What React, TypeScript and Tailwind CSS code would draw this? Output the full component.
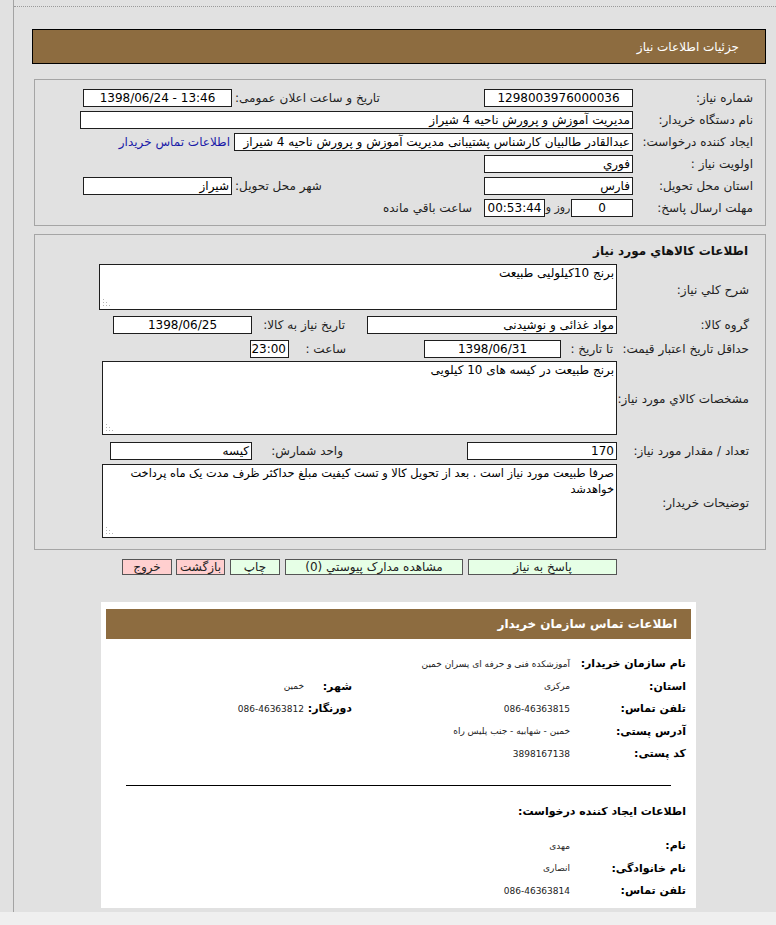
import React from 'react'

const F = "font-['DejaVu_Sans',sans-serif]"

const Box = ({ w, children, align = 'right', ltr, className = '' }: { w: string; children?: React.ReactNode; align?: 'right' | 'center'; ltr?: boolean; className?: string }) => (
  <div
    dir={ltr ? 'ltr' : undefined}
    className={`${w} h-[18px] shrink-0 overflow-hidden whitespace-nowrap border border-[#1e1e1e] bg-white px-[2px] leading-[16px] text-black ${align === 'center' ? 'text-center' : 'text-right'} ${className}`}
  >
    {children}
  </div>
)

const Grip = () => (
  <svg className="absolute bottom-[2px] left-[2px]" width="9" height="9" viewBox="0 0 9 9">
    {[
      [1, 7], [4, 7], [7, 7], [1, 4], [4, 4], [1, 1],
    ].map(([x, y], i) => (
      <rect key={i} x={x} y={y} width="1" height="1" fill="#b5b5b5" />
    ))}
  </svg>
)

const Area = ({ w, h, children, className = '' }: { w: string; h: string; children?: React.ReactNode; className?: string }) => (
  <div className={`relative ${w} ${h} shrink-0 border border-[#1e1e1e] bg-white px-[2px] text-right leading-[16px] text-black ${className}`}>
    {children}
    <Grip />
  </div>
)

const Btn = ({ w, pink, children }: { w: string; pink?: boolean; children: React.ReactNode }) => (
  <div
    className={`${w} h-[16px] shrink-0 whitespace-nowrap border border-[#555] text-center leading-[14px] text-[#222] ${pink ? 'bg-[#ffcfcf]' : 'bg-[#e6ffe6]'}`}
  >
    {children}
  </div>
)

const Row = ({ children, className = '' }: { children: React.ReactNode; className?: string }) => (
  <div className={`flex items-center ${className}`}>{children}</div>
)

const InfoRow = ({ label, value, label2, value2 }: { label: string; value: string; label2?: string; value2?: string }) => (
  <div className="flex h-[22.5px] items-center">
    <div className="w-[116px] shrink-0 text-right text-[11px] font-bold text-black">{label}</div>
    <div className="w-[218px] shrink-0 text-right text-[9px] text-[#222]">{value}</div>
    {label2 && <div className="w-[48px] shrink-0 text-right text-[11px] font-bold text-black">{label2}</div>}
    {value2 && <div className="shrink-0 text-right text-[9px] text-[#222]">{value2}</div>}
  </div>
)

export default function App() {
  return (
    <div dir="rtl" className={`${F} min-h-[925px] w-[776px] bg-[#efefef] text-[12px] text-[#1e1e1e]`}>
      <div className="flex h-[912px] bg-[#e1e1e1]" dir="ltr">
        <div className="w-[13px] shrink-0" />
        <div className="w-[1px] shrink-0 bg-[#a3a3a3]" />
        <div className="flex-1" dir="rtl">
          <div className="mt-[6px] border-t border-dotted border-[#9a9a9a]" />

          {/* header */}
          <div className="ml-[18px] mr-[10px] mt-[22px] flex h-[35px] items-center border border-black bg-[#8d6c40] pr-[26px] text-white">
            جزئیات اطلاعات نیاز
          </div>

          {/* section 1 */}
          <div className="ml-[20px] mr-[10px] mt-[15px] border border-[#a5a5a5] pb-[8px] pt-[9px]">
            <div className="flex flex-col gap-[4px]">
              <Row>
                <div className="w-[130px] shrink-0 pr-[12px]">شماره نیاز:</div>
                <Box w="w-[149px] mr-[2px]" align="center">1298003976000036</Box>
                <div className="w-[252px] shrink-0 pl-[3px] text-left">تاریخ و ساعت اعلان عمومی:</div>
                <Box w="w-[149px]" align="center" ltr>1398/06/24 - 13:46</Box>
              </Row>
              <Row>
                <div className="w-[130px] shrink-0 pr-[12px]">نام دستگاه خریدار:</div>
                <Box w="w-[553px] mr-[2px]">مدیریت آموزش و پرورش ناحیه 4 شیراز</Box>
              </Row>
              <Row>
                <div className="w-[130px] shrink-0 whitespace-nowrap pr-[12px]">ایجاد کننده درخواست:</div>
                <Box w="w-[399px] mr-[2px]">عبدالقادر طالبیان کارشناس پشتیبانی مدیریت آموزش و پرورش ناحیه 4 شیراز</Box>
                <div className="mr-[4px] shrink-0 text-[#1a1aa8]">اطلاعات تماس خریدار</div>
              </Row>
              <Row>
                <div className="w-[130px] shrink-0 pr-[12px]">اولویت نیاز :</div>
                <Box w="w-[149px] mr-[2px]">فوري</Box>
              </Row>
              <Row>
                <div className="w-[130px] shrink-0 pr-[12px]">استان محل تحویل:</div>
                <Box w="w-[149px] mr-[2px]">فارس</Box>
                <div className="w-[252px] shrink-0 pl-[3px] text-left">شهر محل تحویل:</div>
                <Box w="w-[149px]">شیراز</Box>
              </Row>
              <Row>
                <div className="w-[130px] shrink-0 pr-[12px]">مهلت ارسال پاسخ:</div>
                <Box w="w-[62px] mr-[2px]" align="center">0</Box>
                <div className="w-[26px] shrink-0 whitespace-nowrap text-center text-[11px]">روز و</div>
                <Box w="w-[61px]" align="center">00:53:44</Box>
                <div className="mr-[12px] shrink-0 whitespace-nowrap">ساعت باقي مانده</div>
              </Row>
            </div>
          </div>

          {/* section 2 */}
          <div className="ml-[20px] mr-[10px] mt-[8px] border border-[#a5a5a5] pb-[11px] pt-[7px]">
            <div className="pr-[17px] text-[12px] font-bold text-[#111]">اطلاعات كالاهاي مورد نیاز</div>
            <div className="mt-[4px] flex flex-col">
              <Row>
                <div className="w-[148px] shrink-0 pr-[16px] pt-[6px]">شرح کلي نياز:</div>
                <Area w="w-[518px]" h="h-[46px]">برنج 10کیلولیی طبیعت</Area>
              </Row>
              <Row className="mt-[6px]">
                <div className="w-[148px] shrink-0 pr-[16px]">گروه کالا:</div>
                <Box w="w-[250px]">مواد غذائی و نوشیدنی</Box>
                <div className="w-[115px] shrink-0 whitespace-nowrap pr-[22px]">تاریخ نیاز به کالا:</div>
                <Box w="w-[139px]" align="center">1398/06/25</Box>
              </Row>
              <Row className="mt-[6px]">
                <div className="w-[148px] shrink-0 whitespace-nowrap pr-[16px]">حداقل تاریخ اعتبار قیمت:</div>
                <div className="w-[56px] shrink-0 whitespace-nowrap pr-[4px]">تا تاریخ :</div>
                <Box w="w-[137px]" align="center">1398/06/31</Box>
                <div className="w-[135px] shrink-0 pr-[78px]">ساعت :</div>
                <Box w="w-[39px]" align="center">23:00</Box>
              </Row>
              <Row className="mt-[3px]">
                <div className="w-[148px] shrink-0 whitespace-nowrap pr-[16px] pt-[2px]">مشخصات کالاي مورد نياز:</div>
                <Area w="w-[515px]" h="h-[74px]">برنج طبیعت در کیسه های 10 کیلویی</Area>
              </Row>
              <Row className="mt-[7px]">
                <div className="w-[148px] shrink-0 whitespace-nowrap pr-[16px]">تعداد / مقدار مورد نیاز:</div>
                <Box w="w-[150px]">170</Box>
                <div className="w-[215px] shrink-0 pr-[124px] whitespace-nowrap">واحد شمارش:</div>
                <Box w="w-[142px]">کیسه</Box>
              </Row>
              <Row className="mt-[4px]">
                <div className="w-[148px] shrink-0 pr-[16px] pt-[4px]">توضیحات خریدار:</div>
                <Area w="w-[515px]" h="h-[74px]" className="text-[11.4px]">
                  صرفا طبیعت مورد نیاز است . بعد از تحویل کالا و تست کیفیت مبلغ حداکثر ظرف مدت یک ماه پرداخت خواهدشد
                </Area>
              </Row>
            </div>
          </div>

          {/* buttons */}
          <div className="mr-[159px] mt-[9px] flex gap-[5px]">
            <Btn w="w-[149px]">پاسخ به نیاز</Btn>
            <Btn w="w-[178px]">مشاهده مدارک پیوستي (0)</Btn>
            <Btn w="w-[50px]">چاپ</Btn>
            <Btn w="w-[49px]" pink>بازگشت</Btn>
            <Btn w="w-[50px] -mr-[1px]" pink>خروج</Btn>
          </div>

          {/* contact popup */}
          <div className="ml-[87px] mr-[80px] mt-[27px] h-[306px] bg-white pt-[7px]">
            <div className="mx-[5px] flex h-[30px] items-center bg-[#8d6c40] pr-[14px] text-[12px] font-bold text-white">
              اطلاعات تماس سازمان خریدار
            </div>
            <div className="mt-[14px] pr-[10px]">
              <InfoRow label="نام سازمان خریدار:" value="آموزشکده فنی و حرفه ای پسران خمین" />
              <InfoRow label="استان:" value="مرکزی" label2="شهر:" value2="خمین" />
              <InfoRow label="تلفن تماس:" value="086-46363815" label2="دورنگار:" value2="086-46363812" />
              <InfoRow label="آدرس پستی:" value="خمین - شهابیه - جنب پلیس راه" />
              <InfoRow label="کد پستی:" value="3898167138" />
            </div>
            <div className="mx-[25px] mt-[19px] border-t border-black" />
            <div className="mt-[18px] pr-[10px] text-[11px] font-bold text-black">اطلاعات ایجاد کننده درخواست:</div>
            <div className="mt-[15px] pr-[10px]">
              <InfoRow label="نام:" value="مهدی" />
              <InfoRow label="نام خانوادگی:" value="انصاری" />
              <InfoRow label="تلفن تماس:" value="086-46363814" />
            </div>
          </div>
        </div>
      </div>
    </div>
  )
}
